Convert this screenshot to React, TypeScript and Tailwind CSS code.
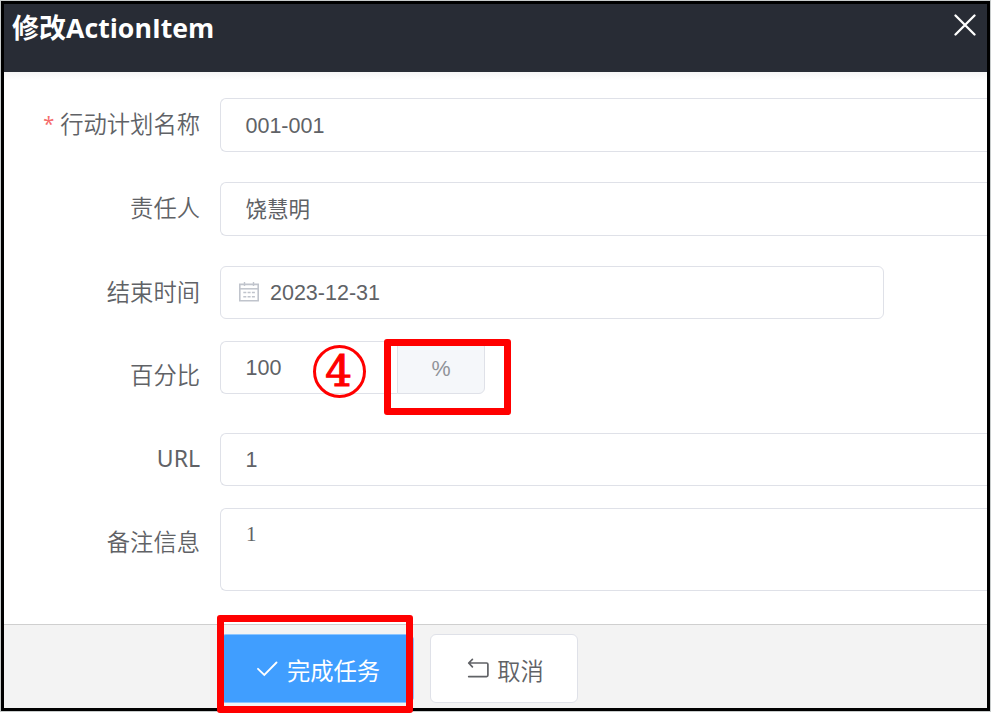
import React from "react";

const ui = "font-['Noto_Sans','Noto_Sans_CJK_SC',sans-serif]";
const labelFont = "font-[350] font-['Noto_Sans','Noto_Sans_CJK_SC_DemiLight','Noto_Sans_CJK_SC',sans-serif]";
const box =
  "flex shrink-0 items-center border border-[#dfe1e8] bg-white text-[21.5px] text-[#606266] font-['Liberation_Sans','Noto_Sans_CJK_SC',sans-serif]";
const openBox = "h-[54px] w-[768px] rounded-l-md border-r-0 pl-[24.5px] pt-0.5";

function Row({
  label,
  required,
  className,
  labelClass = "",
  children,
}: {
  label: React.ReactNode;
  required?: boolean;
  className: string;
  labelClass?: string;
  children: React.ReactNode;
}) {
  return (
    <div className={`flex items-start ${className}`}>
      <div
        className={`mr-5 flex h-[54px] w-[196px] shrink-0 items-center justify-end whitespace-nowrap text-[23.3px] text-[#606266] ${labelFont} ${labelClass}`}
      >
        {required && <span className="mr-1.5 text-[20px] font-normal text-[#f56c6c]">*</span>}
        {label}
      </div>
      {children}
    </div>
  );
}

function CalendarIcon() {
  return (
    <svg width="20" height="20" viewBox="0 0 20 20" fill="none" stroke="#c0c4cc" className="mr-[11px] -mt-1">
      <path d="M.8 2.4h18.4v16.4H.8z" strokeWidth="1.6" />
      <path d="M.8 6.8h18.4" strokeWidth="1.5" />
      <path d="M5.5 0v4M14.5 0v4" strokeWidth="1.4" />
      <path d="M4.3 10.6h3M8.6 10.6h3M12.9 10.6h3M4.3 14.7h3M8.6 14.7h3M12.9 14.7h3" strokeWidth="1.5" />
    </svg>
  );
}

export default function App() {
  return (
    <div className="relative h-[713px] w-[991px] overflow-hidden bg-white pl-px pt-px">
      <div className="flex h-[710px] w-[989px] flex-col overflow-hidden border-[3px] border-black bg-white shadow-[0_0_0_1px_#c8cccc]">
        <header className="flex h-[68px] shrink-0 items-start justify-between bg-[#282c35] text-white">
          <h1 className={`flex items-baseline pl-2 pt-[3px] leading-[42px] font-bold ${ui}`}>
            <span className="text-[27px]">修改</span>
            <span className="text-[26.7px] font-['Open_Sans',sans-serif]">ActionItem</span>
          </h1>
          <svg width="22" height="22" viewBox="0 0 22 22" className="mr-[11px] mt-2.5" stroke="white" strokeWidth="2.3" strokeLinecap="round">
            <path d="M1.5 1.5 20.5 20.5M20.5 1.5 1.5 20.5" />
          </svg>
        </header>

        <main className="h-[552px] shrink-0 bg-gradient-to-b from-[#f5f5f5] via-white via-[1.5%] to-white pt-[26px]">
          <Row label="行动计划名称" required className="h-[84px]" labelClass="-mt-px">
            <div className={`${box} ${openBox}`}>001-001</div>
          </Row>
          <Row label="责任人" className="h-[84px]" labelClass="-mt-px">
            <div className={`${box} ${openBox}`}>饶慧明</div>
          </Row>
          <Row label="结束时间" className="h-[75px]" labelClass="-mt-px">
            <div className={`${box} h-[53px] w-[664px] rounded-md pl-[18px] pt-0.5`}>
              <CalendarIcon />
              2023-12-31
            </div>
          </Row>
          <Row label="百分比" className="h-[92px]" labelClass="mt-[7px]">
            <div className={`${box} h-[53px] w-[177px] rounded-l-md border-r-0 pl-[24.5px] pt-0.5`}>100</div>
            <div className={`${box} h-[53px] w-[88px] justify-center rounded-r-md !bg-[#f5f7fa] pt-[3px] !text-[#909399]`}>%</div>
          </Row>
          <Row label={<span className="font-normal">URL</span>} className="h-[75px]" labelClass="-mt-0.5 !text-[23px]">
            <div className={`${box} ${openBox} !h-[53px]`}>1</div>
          </Row>
          <Row label="备注信息" className="h-[83px]" labelClass="mt-[7px]">
            <div className="h-[83px] w-[768px] shrink-0 rounded-l-md border border-r-0 border-[#dfe1e8] pl-[25px] pt-[11px] text-[21px] leading-7 text-[#606266] font-['Liberation_Serif',serif]">
              1
            </div>
          </Row>
        </main>

        <footer className="flex flex-1 items-start border-t border-[#cfcfcf] bg-[#f3f3f3] pl-[216px] pt-[9px]">
          <button className={`mr-4 flex h-[69px] w-[194px] items-center justify-center rounded-md border border-[#8cc5ff] bg-[#409eff] pl-[3px] pt-1.5 text-[23.3px] text-white ${ui}`}>
            <svg width="22" height="16" viewBox="0 0 22 16" fill="none" stroke="white" strokeWidth="1.8" strokeLinecap="round" className="mr-2 -mt-1.5">
              <path d="M1 7.8 7.3 14 19.5 1.5" />
            </svg>
            完成任务
          </button>
          <button className={`flex h-[69px] w-[148px] items-center justify-center rounded-md border border-[#dfe1e8] bg-white pl-[3px] pt-1.5 text-[23.3px] text-[#606266] ${labelFont}`}>
            <svg width="22" height="20" viewBox="0 0 22 20" fill="none" stroke="#606266" strokeWidth="1.7" strokeLinecap="round" strokeLinejoin="round" className="mr-2 -mt-2">
              <path d="M5.4 1.4 1.7 5l3.7 3.9M1.7 5H19.6q1.3 0 1.3 1.3v11q0 1.3-1.3 1.3H1.7" />
            </svg>
            取消
          </button>
        </footer>
      </div>

      <div className="absolute left-[313px] top-[345px] flex h-[53px] w-[53px] items-center justify-center rounded-full border-[3.5px] border-[#f00] text-[42px] leading-none text-[#f00] font-['DejaVu_Serif',serif] [-webkit-text-stroke:1.2px_#f00]">
        <span className="pr-0.5">4</span>
      </div>
      <div className="absolute left-[384px] top-[339px] h-[76px] w-[127px] rounded-[3px] border-[7px] border-[#f00]" />
      <div className="absolute left-[217px] top-[615px] h-[98px] w-[196px] rounded-[3px] border-[7px] border-[#f00]" />
    </div>
  );
}
